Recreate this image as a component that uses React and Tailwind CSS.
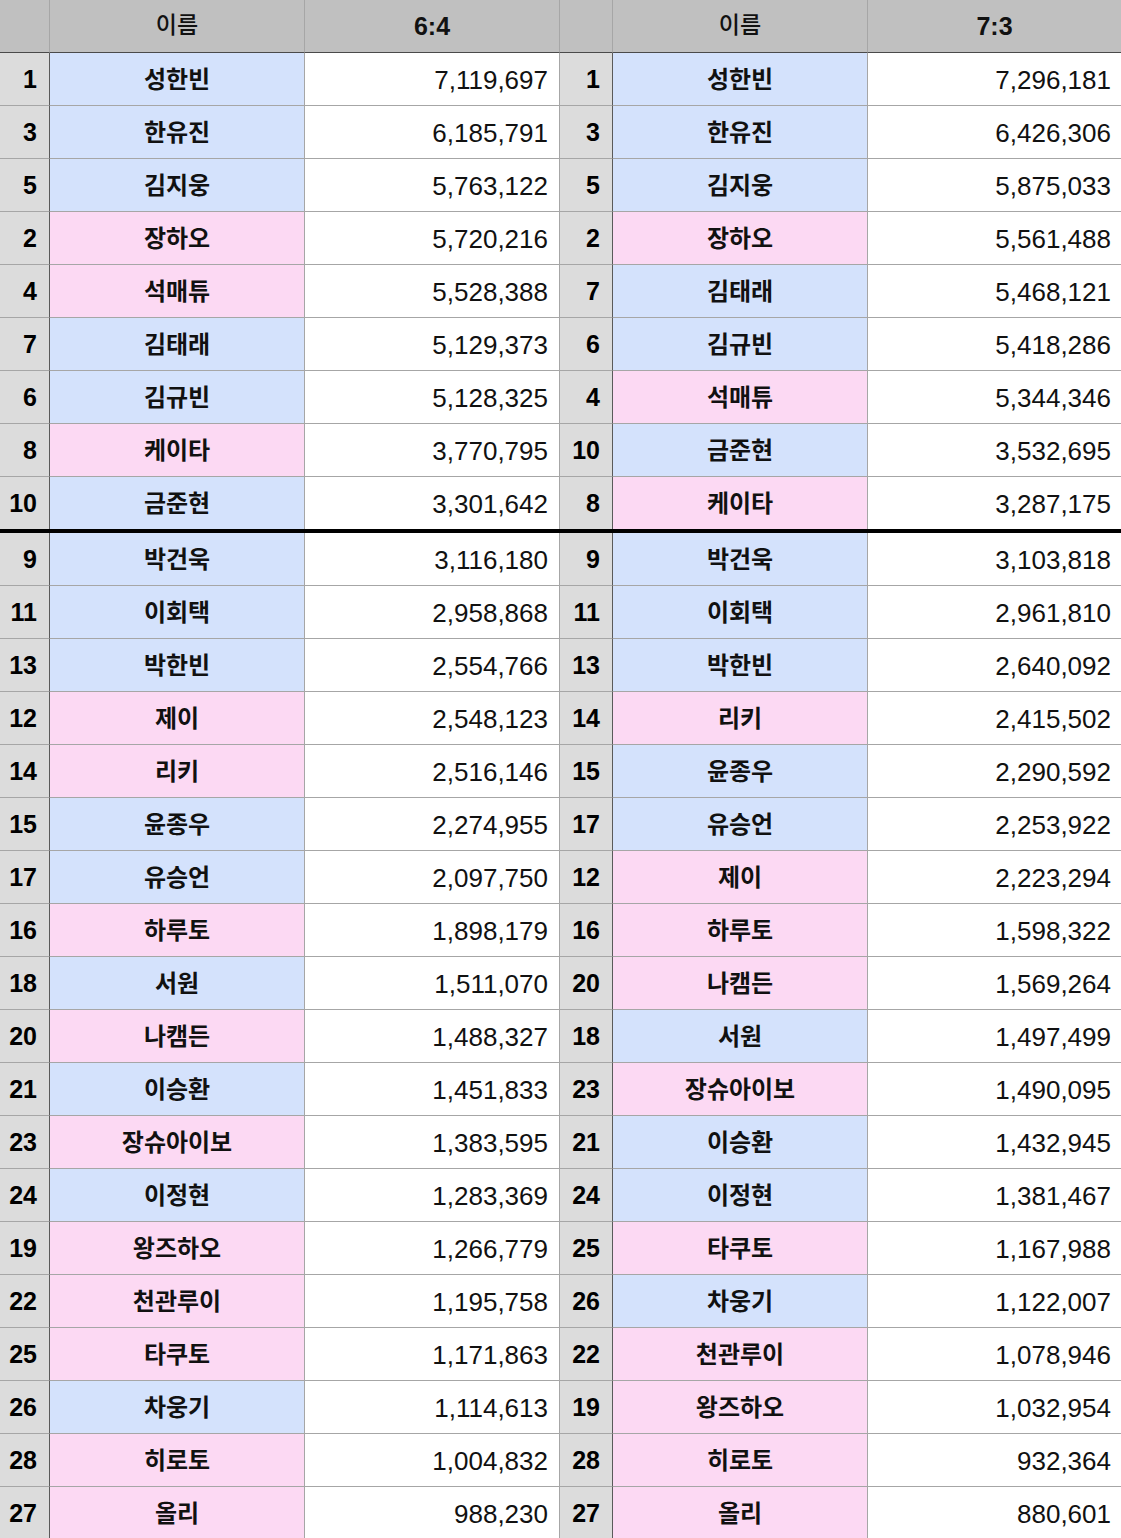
const LEFT = [
  [1, '성한빈', '7,119,697'], [3, '한유진', '6,185,791'], [5, '김지웅', '5,763,122'],
  [2, '장하오', '5,720,216'], [4, '석매튜', '5,528,388'], [7, '김태래', '5,129,373'],
  [6, '김규빈', '5,128,325'], [8, '케이타', '3,770,795'], [10, '금준현', '3,301,642'],
  [9, '박건욱', '3,116,180'], [11, '이회택', '2,958,868'], [13, '박한빈', '2,554,766'],
  [12, '제이', '2,548,123'], [14, '리키', '2,516,146'], [15, '윤종우', '2,274,955'],
  [17, '유승언', '2,097,750'], [16, '하루토', '1,898,179'], [18, '서원', '1,511,070'],
  [20, '나캠든', '1,488,327'], [21, '이승환', '1,451,833'], [23, '장슈아이보', '1,383,595'],
  [24, '이정현', '1,283,369'], [19, '왕즈하오', '1,266,779'], [22, '천관루이', '1,195,758'],
  [25, '타쿠토', '1,171,863'], [26, '차웅기', '1,114,613'], [28, '히로토', '1,004,832'],
  [27, '올리', '988,230'],
]

const RIGHT = [
  [1, '성한빈', '7,296,181'], [3, '한유진', '6,426,306'], [5, '김지웅', '5,875,033'],
  [2, '장하오', '5,561,488'], [7, '김태래', '5,468,121'], [6, '김규빈', '5,418,286'],
  [4, '석매튜', '5,344,346'], [10, '금준현', '3,532,695'], [8, '케이타', '3,287,175'],
  [9, '박건욱', '3,103,818'], [11, '이회택', '2,961,810'], [13, '박한빈', '2,640,092'],
  [14, '리키', '2,415,502'], [15, '윤종우', '2,290,592'], [17, '유승언', '2,253,922'],
  [12, '제이', '2,223,294'], [16, '하루토', '1,598,322'], [20, '나캠든', '1,569,264'],
  [18, '서원', '1,497,499'], [23, '장슈아이보', '1,490,095'], [21, '이승환', '1,432,945'],
  [24, '이정현', '1,381,467'], [25, '타쿠토', '1,167,988'], [26, '차웅기', '1,122,007'],
  [22, '천관루이', '1,078,946'], [19, '왕즈하오', '1,032,954'], [28, '히로토', '932,364'],
  [27, '올리', '880,601'],
]

const PINK = ['장하오', '석매튜', '케이타', '제이', '리키', '하루토', '나캠든', '장슈아이보', '왕즈하오', '천관루이', '타쿠토', '히로토', '올리']

const latin = "font-['Liberation_Sans','Noto_Sans_CJK_KR',sans-serif]"
const korean = "font-['Noto_Sans_CJK_KR',sans-serif]"

function Half({ row, last }) {
  const [rank, name, votes] = row
  const pink = PINK.includes(name)
  return (
    <>
      <div className={`h-[53px] flex items-center justify-end pr-[12px] pt-[2px] bg-[#dcdcdc] border-b border-b-[#a6a6a6] border-r border-r-[#5a5a5a] text-[25px] font-bold text-black ${latin}`}>
        {rank}
      </div>
      <div className={`h-[53px] flex items-center justify-center pb-[3px] border-b border-b-[#a6a6a6] border-r border-r-[#a6a6a6] text-[24px] font-semibold text-[#111] ${korean} ${pink ? 'bg-[#fcd9f3]' : 'bg-[#d4e2fc]'}`}>
        {name}
      </div>
      <div className={`h-[53px] flex items-center justify-end pt-[2px] bg-white border-b border-b-[#a6a6a6] text-[26px] text-[#111] ${latin} ${last ? 'pr-[10px]' : 'pr-[11px] border-r border-r-[#a6a6a6]'}`}>
        {votes}
      </div>
    </>
  )
}

export default function App() {
  return (
    <div className="w-[1121px] h-[1538px] overflow-hidden bg-white">
      <div className="grid grid-cols-[50px_255px_255px_53px_255px_253px]">
        {/* header */}
        {[0, 1].map(i => (
          <div key={i} className="contents">
            <div className="h-[53px] bg-[#c0c0c0] border-b border-b-[#4a4a4a] border-r border-r-[#a6a6a6]" />
            <div className={`h-[53px] flex items-center justify-center pb-[6px] bg-[#c0c0c0] border-b border-b-[#4a4a4a] border-r border-r-[#a6a6a6] text-[23px] font-medium text-[#111] ${korean}`}>
              이름
            </div>
            <div className={`h-[53px] flex items-center justify-center pt-[1px] bg-[#c0c0c0] border-b border-b-[#4a4a4a] text-[25px] font-bold text-[#111] ${latin} ${i === 0 ? 'border-r border-r-[#a6a6a6]' : ''}`}>
              {i === 0 ? '6:4' : '7:3'}
            </div>
          </div>
        ))}

        {LEFT.map((row, idx) => (
          <div key={idx} className="contents">
            <Half row={row} />
            <Half row={RIGHT[idx]} last />
            {idx === 8 && <div className="col-span-6 h-[4px] -mt-[1px] bg-black" />}
          </div>
        ))}
      </div>
    </div>
  )
}
